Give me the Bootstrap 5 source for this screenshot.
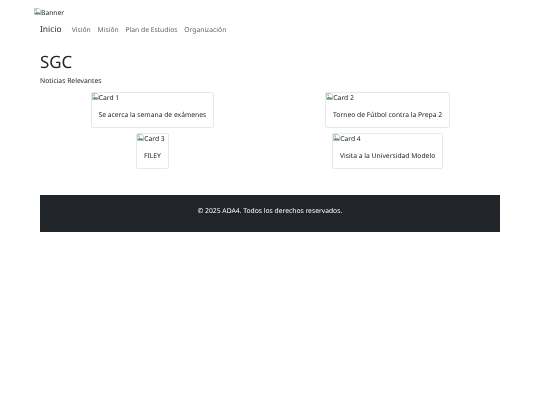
<!DOCTYPE html>
<html lang="es">
<head>
<meta charset="utf-8">
<title>SGC</title>
<link rel="stylesheet" href="https://cdn.jsdelivr.net/npm/bootstrap@5.3.0/dist/css/bootstrap.min.css">
<style>
body { font-family: "Noto Sans", sans-serif; font-size: 6.75px; line-height: 1.5; color: #212529; text-rendering: geometricPrecision; }
.shell { width: 460px; margin: 0 auto; padding-top: 8px; will-change: transform; }
.banner-alt { margin-left: -6px; height: 10px; display: flex; }
.alt-pic { display: flex; align-items: flex-start; line-height: 10.1px; height: 10.1px; }
.alt-pic svg { width: 7px; height: 7px; flex: none; }
.topnav { --bs-navbar-nav-link-padding-x: 3.4px; padding: 0; height: 23px; margin-top: 1px; }
.topnav .navbar-brand { font-size: 8.45px; padding: 0; margin-right: 6.75px; color: #212529; }
.topnav .nav-link { font-size: 6.75px; padding-top: 0; padding-bottom: 0; color: rgba(0,0,0,.65); }
.page-title { font-size: 16.9px; font-weight: 400; line-height: 20.3px; margin: 10px 0 3.4px; }
.lead-line { margin: 0 0 6.7px; line-height: 10.1px; }
.news-row { --bs-gutter-x: 10.5px; --bs-gutter-y: 5px; }
.news-card { --bs-card-border-color: rgba(0,0,0,.09); width: fit-content; border-radius: 2.5px; margin: 0 auto; }
.news-card .card-body { padding: 6.75px; line-height: 10.1px; flex: none; }
.site-foot { margin-top: 26px; height: 37px; display: flex; align-items: center; justify-content: center; padding-bottom: 5px; }
</style>
</head>
<body>
<div class="shell">
  <div class="banner-alt"><span class="alt-pic"><svg viewBox="0 0 16 16"><path d="M1 1h10l4 4v10H1z" fill="#fff" stroke="#9aa0a6" stroke-width="1.5"/><path d="M2 12l4-4 3 3 2-2 3 3v2H2z" fill="#5f9e5a"/><circle cx="5" cy="5" r="2" fill="#8ab4f8"/></svg>Banner</span></div>
  <nav class="navbar navbar-expand topnav">
    <a class="navbar-brand" href="#">Inicio</a>
    <div class="navbar-nav">
      <a class="nav-link" href="#">Visión</a>
      <a class="nav-link" href="#">Misión</a>
      <a class="nav-link" href="#">Plan de Estudios</a>
      <a class="nav-link" href="#">Organización</a>
    </div>
  </nav>
  <h1 class="page-title">SGC</h1>
  <p class="lead-line">Noticias Relevantes</p>
  <div class="row news-row">
    <div class="col-6"><div class="card news-card"><span class="alt-pic"><svg viewBox="0 0 16 16"><path d="M1 1h10l4 4v10H1z" fill="#fff" stroke="#9aa0a6" stroke-width="1.5"/><path d="M2 12l4-4 3 3 2-2 3 3v2H2z" fill="#5f9e5a"/><circle cx="5" cy="5" r="2" fill="#8ab4f8"/></svg>Card 1</span><div class="card-body">Se acerca la semana de exámenes</div></div></div>
    <div class="col-6"><div class="card news-card"><span class="alt-pic"><svg viewBox="0 0 16 16"><path d="M1 1h10l4 4v10H1z" fill="#fff" stroke="#9aa0a6" stroke-width="1.5"/><path d="M2 12l4-4 3 3 2-2 3 3v2H2z" fill="#5f9e5a"/><circle cx="5" cy="5" r="2" fill="#8ab4f8"/></svg>Card 2</span><div class="card-body">Torneo de Fútbol contra la Prepa 2</div></div></div>
    <div class="col-6"><div class="card news-card"><span class="alt-pic"><svg viewBox="0 0 16 16"><path d="M1 1h10l4 4v10H1z" fill="#fff" stroke="#9aa0a6" stroke-width="1.5"/><path d="M2 12l4-4 3 3 2-2 3 3v2H2z" fill="#5f9e5a"/><circle cx="5" cy="5" r="2" fill="#8ab4f8"/></svg>Card 3</span><div class="card-body text-center">FILEY</div></div></div>
    <div class="col-6"><div class="card news-card"><span class="alt-pic"><svg viewBox="0 0 16 16"><path d="M1 1h10l4 4v10H1z" fill="#fff" stroke="#9aa0a6" stroke-width="1.5"/><path d="M2 12l4-4 3 3 2-2 3 3v2H2z" fill="#5f9e5a"/><circle cx="5" cy="5" r="2" fill="#8ab4f8"/></svg>Card 4</span><div class="card-body">Visita a la Universidad Modelo</div></div></div>
  </div>
  <footer class="site-foot text-bg-dark">© 2025 ADA4. Todos los derechos reservados.</footer>
</div>
<script src="https://cdn.jsdelivr.net/npm/bootstrap@5.3.0/dist/js/bootstrap.bundle.min.js"></script>
</body>
</html>
